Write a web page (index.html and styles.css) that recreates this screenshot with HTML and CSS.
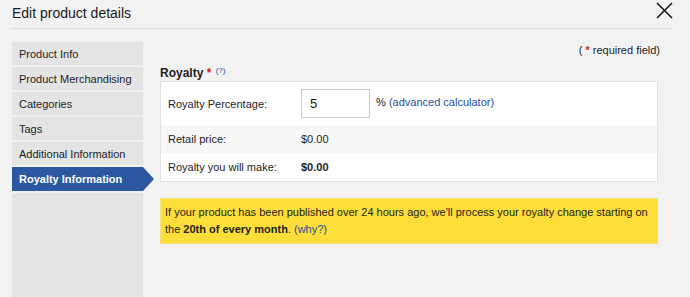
FILE: index.html
```html
<!DOCTYPE html>
<html>
<head>
<meta charset="utf-8">
<title>Edit product details</title>
<link rel="stylesheet" href="styles.css">
</head>
<body>
<div class="dialog">
  <div class="dialog-head">
    <h1>Edit product details</h1>
    <svg class="close" width="17" height="17" viewBox="0 0 17 17">
      <path d="M1 1 L16 16 M16 1 L1 16" stroke="#111" stroke-width="1.5" fill="none"/>
    </svg>
  </div>

  <div class="dialog-body">
    <ul class="tabs">
      <li>Product Info</li>
      <li>Product Merchandising</li>
      <li>Categories</li>
      <li>Tags</li>
      <li>Additional Information</li>
      <li class="active">Royalty Information</li>
    </ul>

    <div class="main">
      <p class="required">( <span class="star">*</span> required field)</p>
      <h2>Royalty <span class="star">*</span> <a class="help" href="#">(?)</a></h2>

      <table class="royalty">
        <tr class="first">
          <td class="label">Royalty Percentage:</td>
          <td><input type="text" value="5"> <span class="pct">% <a href="#">(advanced calculator)</a></span></td>
        </tr>
        <tr class="alt">
          <td class="label">Retail price:</td>
          <td>$0.00</td>
        </tr>
        <tr>
          <td class="label">Royalty you will make:</td>
          <td><b>$0.00</b></td>
        </tr>
      </table>

      <div class="notice">
        If your product has been published over 24 hours ago, we'll process your royalty change starting on<br>
        the <b>20th of every month</b>. <a href="#">(why?)</a>
      </div>
    </div>
  </div>
</div>
</body>
</html>
```

FILE: styles.css
```css
html, body {
  margin: 0;
  padding: 0;
  background-color: #f2f2f2;
  height: 100%;
  overflow: hidden;
}

body {
  font-family: 'Liberation Sans', Arial, sans-serif;
  font-size: 11px;
  color: #1d1d1d;
}

a {
  color: #1f4f9e;
  text-decoration: none;
}

.dialog {
  padding: 0 17px 0 12px;
}

.dialog-head {
  display: flex;
  justify-content: space-between;
  align-items: flex-start;
  height: 28px;
  border-bottom: 1px solid #dedede;
}

.dialog-head h1 {
  margin: 5px 0 0 0;
  font-size: 14px;
  font-weight: normal;
  line-height: 16px;
  color: #1a1a1a;
}

.close {
  margin-top: 2px;
}

.dialog-body {
  display: flex;
  margin-top: 13px;
}

.tabs {
  list-style: none;
  margin: 0;
  padding: 0;
  width: 131px;
  height: 260px;
  background-color: #e4e4e4;
  flex-shrink: 0;
}

.tabs li {
  position: relative;
  height: 23px;
  line-height: 25px;
  padding-left: 7px;
  border-bottom: 2px solid #f0f0f0;
  white-space: nowrap;
}

.tabs li.active {
  background-color: #2b58a0;
  color: #fff;
  font-weight: bold;
  height: 24px;
  line-height: 25px;
  margin-top: -1px;
  border-top: 1px solid #f0f0f0;
}

.tabs li.active::after {
  content: "";
  position: absolute;
  right: -11px;
  top: 0;
  border-left: 11px solid #2b58a0;
  border-top: 12px solid transparent;
  border-bottom: 12px solid transparent;
}

.main {
  flex: 1;
  margin-left: 17px;
  margin-right: 15px;
}

.required {
  margin: 0;
  text-align: right;
  line-height: 16px;
  margin-right: -2px;
}

.star {
  color: #d2232a;
  font-weight: bold;
}

h2 {
  margin: 5px 0 0 0;
  font-size: 12px;
  line-height: 16px;
  font-weight: bold;
}

h2 .help {
  font-size: 8px;
  font-weight: normal;
  vertical-align: 4px;
  margin-left: 1px;
}

.royalty {
  width: 100%;
  border-collapse: collapse;
  background-color: #fff;
  border: 1px solid #e2e2e2;
}

.royalty td {
  height: 28px;
  padding: 0;
}

.royalty td.label {
  width: 133px;
  padding-left: 7px;
}

.royalty tr.first td {
  height: 43px;
}

.royalty tr.alt td {
  background-color: #f7f7f7;
}

.royalty input {
  width: 59px;
  height: 27px;
  border: 1px solid #c8c8c8;
  padding: 0 0 0 8px;
  font-family: 'Liberation Sans', Arial, sans-serif;
  font-size: 13px;
  color: #111;
  vertical-align: middle;
  margin: 0;
}

.pct {
  margin-left: 3px;
}

.notice {
  margin-top: 16px;
  background-color: #fddd38;
  border: 1px solid #f6e37e;
  padding: 5px 4px 5px 4px;
  line-height: 17px;
}
```
